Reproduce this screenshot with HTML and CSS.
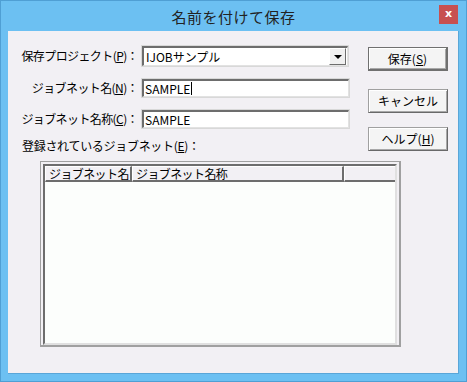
FILE: index.html
```html
<!DOCTYPE html>
<html lang="ja">
<head>
    <meta charset="UTF-8">
    <title>名前を付けて保存</title>
    <link rel="stylesheet" href="styles.css">
</head>
<body>
    <div class="window">
        <div class="titlebar">
            <span class="title">名前を付けて保存</span>
            <span class="close">x</span>
        </div>

        <div class="client">
            <div class="top">
                <div class="form">
                    <label class="label">保存プロジェクト(<u>P</u>)：</label>
                    <div class="combo">
                        <span class="value">IJOBサンプル</span>
                        <span class="drop"><span class="arrow"></span></span>
                    </div>

                    <label class="label">ジョブネット名(<u>N</u>)：</label>
                    <div class="field">SAMPLE<span class="caret"></span></div>

                    <label class="label">ジョブネット名称(<u>C</u>)：</label>
                    <div class="field">SAMPLE</div>

                    <div class="list-label">登録されているジョブネット(<u>E</u>)：</div>
                </div>

                <div class="buttons">
                    <button class="btn default">保存(<u>S</u>)</button>
                    <button class="btn cancel">キャンセル</button>
                    <button class="btn help">ヘルプ(<u>H</u>)</button>
                </div>
            </div>

            <div class="list">
                <div class="list-inner">
                    <div class="header">
                        <div class="col name">ジョブネット名</div>
                        <div class="col title-col">ジョブネット名称</div>
                        <div class="col rest"></div>
                    </div>
                    <div class="rows"></div>
                </div>
            </div>
        </div>
    </div>
</body>
</html>
```

FILE: styles.css
```css
body {
    margin: 0;
    font-family: "Noto Sans CJK JP", "Noto Sans", sans-serif;
    font-size: 12px;
    color: #000;
}

u {
    text-decoration: underline;
    text-underline-offset: 1px;
}

.window {
    width: 467px;
    height: 382px;
    box-sizing: border-box;
    background-color: #6cc0f2;
    border: 1px solid #4f9fd4;
    display: flex;
    flex-direction: column;
}

.titlebar {
    height: 30px;
    position: relative;
    display: flex;
    justify-content: center;
    align-items: center;
}

.title {
    font-size: 15px;
    color: #222;
    letter-spacing: 0.5px;
    margin-top: 1px;
}

.close {
    position: absolute;
    left: 438px;
    top: 4px;
    width: 19px;
    height: 19px;
    background-color: #c75050;
    color: #fff;
    font-family: "DejaVu Sans", sans-serif;
    font-weight: bold;
    font-size: 11px;
    line-height: 18px;
    text-align: center;
}

.client {
    margin: 0 7px 7px 7px;
    flex: 1;
    background-color: #f2f0f4;
    border: 1px solid #5aa6d8;
    border-width: 0 1px 1px 0;
}

.top {
    display: flex;
    align-items: flex-start;
    padding-top: 15px;
}

.form {
    display: grid;
    grid-template-columns: 130px 207px;
    column-gap: 4px;
    row-gap: 13px;
    align-items: center;
    width: 341px;
}

.label {
    text-align: right;
    line-height: 14px;
    white-space: nowrap;
    letter-spacing: -0.6px;
}

.list-label {
    grid-column: 1 / span 2;
    margin-top: -2px;
    padding-left: 14px;
    line-height: 14px;
    letter-spacing: -0.3px;
}

.combo, .field {
    height: 18px;
    box-sizing: border-box;
    background-color: #fff;
    border-top: 2px solid #6d6d6d;
    border-left: 2px solid #6d6d6d;
    border-right: 1px solid #e2e2e2;
    border-bottom: 1px solid #e2e2e2;
    box-shadow: 0 0 0 1px #d8d8d8;
    line-height: 15px;
    padding-left: 1px;
    display: flex;
    align-items: center;
}

.combo {
    height: 20px;
    width: 206px;
    justify-content: space-between;
}

.value {
    padding-left: 1px;
}

.drop {
    width: 15px;
    height: 15px;
    margin-right: 1px;
    background-color: #f0f0f0;
    border-top: 1px solid #fff;
    border-left: 1px solid #fff;
    border-right: 1px solid #6d6d6d;
    border-bottom: 1px solid #6d6d6d;
    display: flex;
    justify-content: center;
    align-items: center;
}

.arrow {
    width: 0;
    height: 0;
    border-left: 4px solid transparent;
    border-right: 4px solid transparent;
    border-top: 4px solid #000;
}

.caret {
    display: inline-block;
    width: 1px;
    height: 13px;
    background-color: #000;
    margin-left: 1px;
}

.buttons {
    display: flex;
    flex-direction: column;
    margin-left: 19px;
    padding-top: 1px;
}

.btn {
    width: 80px;
    height: 24px;
    font-family: inherit;
    font-size: 12px;
    line-height: 14px;
    padding: 0;
    background-color: #f4f4f4;
    border: 1px solid #a0a0a0;
    border-right-color: #696969;
    border-bottom-color: #696969;
    box-shadow: inset 1px 1px #fff, inset -1px -1px #a8a8a8;
}

.btn.default {
    border-color: #707070;
    border-bottom-width: 2px;
    border-right-width: 2px;
}

.cancel {
    margin-top: 18px;
}

.help {
    margin-top: 14px;
}

.list {
    margin: 8px 0 0 32px;
    width: 361px;
    height: 186px;
    box-sizing: border-box;
    border-top: 1px solid #a0a0a0;
    border-left: 1px solid #a0a0a0;
    border-right: 2px solid #a0a0a0;
    border-bottom: 2px solid #a0a0a0;
    padding: 2px 2px 0 2px;
}

.list-inner {
    height: 100%;
    box-sizing: border-box;
    background-color: #fcfefc;
    border-top: 2px solid #6d6d6d;
    border-left: 2px solid #6d6d6d;
    border-right: 2px solid #e0e0e0;
    border-bottom: 2px solid #e0e0e0;
    display: flex;
    flex-direction: column;
}

.header {
    display: flex;
    height: 16px;
}

.col {
    box-sizing: border-box;
    background-color: #f2f0f4;
    border-top: 1px solid #fff;
    border-left: 1px solid #fff;
    border-right: 2px solid #6d6d6d;
    border-bottom: 2px solid #6d6d6d;
    line-height: 13px;
    padding-left: 3px;
    white-space: nowrap;
    letter-spacing: -0.6px;
    overflow: hidden;
}

.name {
    width: 87px;
}

.title-col {
    width: 212px;
}

.rest {
    flex: 1;
    border-right: none;
}

.rows {
    flex: 1;
}
```
